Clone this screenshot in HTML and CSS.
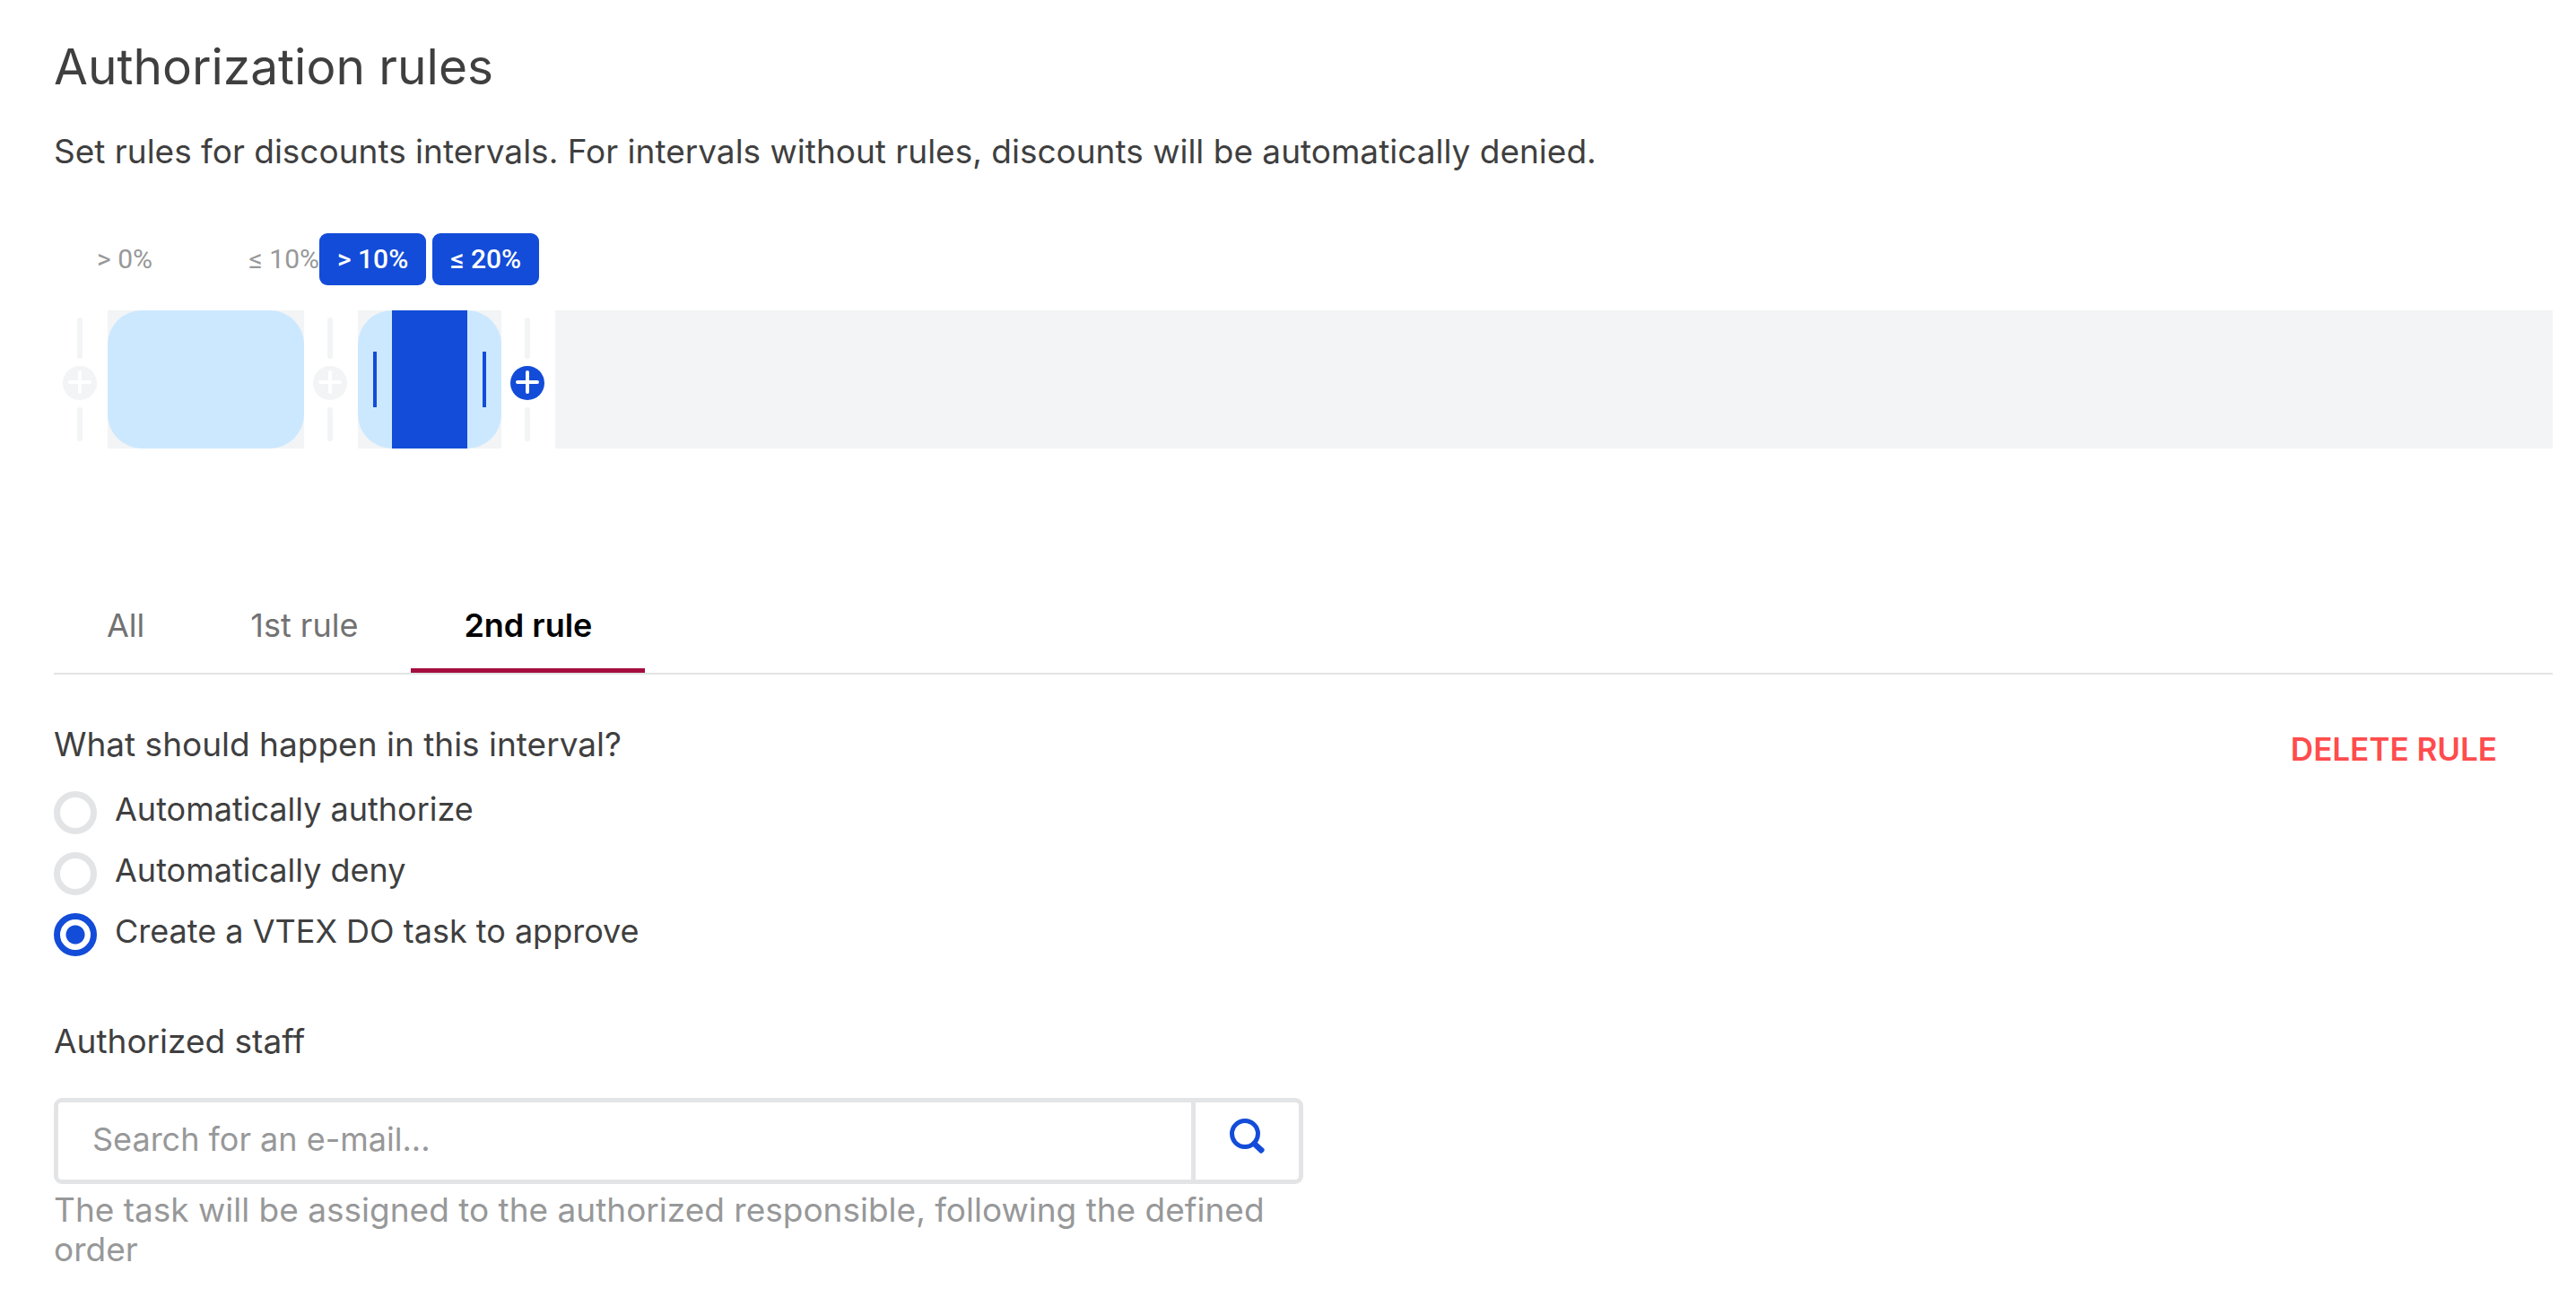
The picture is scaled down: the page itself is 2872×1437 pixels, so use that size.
FILE: index.html
```html
<!DOCTYPE html>
<html lang="en">
<head>
  <meta charset="utf-8">
  <meta name="viewport" content="width=device-width, initial-scale=1">
  <title>Authorization rules</title>
  <link rel="stylesheet" href="styles.css">
</head>
<body>
  <main class="page">
    <h1 class="title">Authorization rules</h1>
    <p class="subtitle">Set rules for discounts intervals. For intervals without rules, discounts will be automatically denied.</p>

    <section class="slider" aria-label="Discount intervals">
      <div class="limits">
        <div class="limits-idle">
          <span>&gt; 0%</span>
          <span>≤ 10%</span>
        </div>
        <div class="limits-active">
          <span class="pill">&gt; 10%</span>
          <span class="pill">≤ 20%</span>
        </div>
      </div>
      <div class="track">
        <div class="gap">
          <span class="bar bar-top"></span>
          <button class="add" type="button" aria-label="Add rule before the 1st" disabled>
            <svg viewBox="0 0 38 38" aria-hidden="true"><path d="M19 7V29M8 18H30"/></svg>
          </button>
          <span class="bar bar-bottom"></span>
        </div>
        <div class="cell cell-first"><div class="range"></div></div>
        <div class="gap">
          <span class="bar bar-top"></span>
          <button class="add" type="button" aria-label="Add rule before the 2nd" disabled>
            <svg viewBox="0 0 38 38" aria-hidden="true"><path d="M19 7V29M8 18H30"/></svg>
          </button>
          <span class="bar bar-bottom"></span>
        </div>
        <div class="cell cell-second">
          <div class="range range-active">
            <span class="handle"></span>
            <span class="span"></span>
            <span class="handle"></span>
          </div>
        </div>
        <div class="gap">
          <span class="bar bar-top"></span>
          <button class="add" type="button" aria-label="Add rule after the 2nd">
            <svg viewBox="0 0 38 38" aria-hidden="true"><path d="M19 7V29M8 18H30"/></svg>
          </button>
          <span class="bar bar-bottom"></span>
        </div>
        <div class="cell cell-rest"></div>
      </div>
    </section>

    <nav class="tabs" aria-label="Rules">
      <button class="tab" type="button">All</button>
      <button class="tab" type="button">1st rule</button>
      <button class="tab tab-current" type="button" aria-current="true">2nd rule</button>
    </nav>

    <div class="rule">
      <fieldset class="choices">
        <legend class="heading">What should happen in this interval?</legend>
        <div class="choice">
          <input class="radio" type="radio" name="action" id="authorize">
          <label for="authorize">Automatically authorize</label>
        </div>
        <div class="choice">
          <input class="radio" type="radio" name="action" id="deny">
          <label for="deny">Automatically deny</label>
        </div>
        <div class="choice">
          <input class="radio" type="radio" name="action" id="task" checked>
          <label for="task">Create a VTEX DO task to approve</label>
        </div>
      </fieldset>
      <button class="delete" type="button">DELETE RULE</button>
    </div>

    <div class="staff">
      <label class="heading" for="email">Authorized staff</label>
      <div class="search">
        <input class="search-input" type="text" id="email" placeholder="Search for an e-mail...">
        <button class="search-button" type="button" aria-label="Search">
          <svg viewBox="0 0 40 40" aria-hidden="true">
            <circle cx="17" cy="17" r="14.5"/>
            <path d="M26 24.5L30.5 26.5L38.2 33.6Q39.4 35 38.2 36.4L36.4 38.2Q35 39.4 33.6 38.2L26.5 31.5L24.5 27Z"/>
          </svg>
        </button>
      </div>
      <p class="help">The task will be assigned to the authorized responsible, following the defined order</p>
    </div>
  </main>
</body>
</html>
```
FILE: styles.css
```css
:root {
  --action: #134cd8;
  --action-soft: #cce8ff;
  --surface: #f2f4f5;
  --line: #e3e4e6;
  --text: #3f3f40;
  --muted: #979899;
}

* {
  box-sizing: border-box;
}

body {
  margin: 0;
  background: #fff;
  color: var(--text);
  font-family: Inter, "Liberation Sans", sans-serif;
  font-size: 37px;
  line-height: 44px;
}

button,
input {
  margin: 0;
  padding: 0;
  border: 0;
  background: none;
  color: inherit;
  font: inherit;
}

button {
  cursor: pointer;
}

.page {
  padding: 40px 26px 20px 60px;
}

.title {
  margin: 0 0 34px;
  font-size: 55px;
  font-weight: 400;
  line-height: 68px;
}

.subtitle {
  margin: 0 0 64px;
  line-height: 54px;
}

/* Interval slider */

.limits {
  display: flex;
  margin-bottom: 28px;
  font-family: Roboto, "Liberation Sans", sans-serif;
  font-size: 30px;
  line-height: 58px;
}

.limits-idle {
  display: flex;
  justify-content: space-between;
  width: 296px;
  padding-left: 48px;
  color: var(--muted);
}

.limits-active {
  display: flex;
  gap: 7px;
}

.pill {
  padding: 0 20px;
  border-radius: 9px;
  background: var(--action);
  color: #fff;
  font-weight: 500;
}

.track {
  display: flex;
  height: 154px;
}

.gap {
  display: flex;
  flex: none;
  flex-direction: column;
  align-items: center;
  gap: 8px;
  width: 60px;
  padding: 8px 2px 8px 0;
}

.bar {
  width: 6px;
  border-radius: 3px;
  background: var(--surface);
}

.bar-top {
  height: 46px;
}

.bar-bottom {
  height: 38px;
}

.add {
  width: 38px;
  height: 38px;
  border-radius: 50%;
  background: var(--action);
}

.add:disabled {
  background: var(--surface);
  cursor: default;
}

.add svg {
  display: block;
  fill: none;
  stroke: #fff;
  stroke-width: 4;
  stroke-linecap: round;
}

.cell {
  flex: none;
  background: var(--surface);
}

.cell-first {
  width: 219px;
}

.cell-second {
  width: 160px;
}

.cell-rest {
  flex: 1;
}

.range {
  height: 100%;
  border-radius: 38px;
  background: var(--action-soft);
}

.range-active {
  display: flex;
}

.span {
  flex: 1;
  background: var(--action);
}

.handle {
  display: flex;
  align-items: center;
  justify-content: center;
  width: 38px;
}

.handle::before {
  content: "";
  width: 4px;
  height: 62px;
  background: var(--action);
}

/* Tabs */

.tabs {
  display: flex;
  margin-top: 149px;
  border-bottom: 2px solid var(--line);
}

.tab {
  padding: 21px 59px;
  border-bottom: 5px solid transparent;
  color: #727273;
  font-size: 36px;
  line-height: 54px;
}

.tab-current {
  border-color: #a50e3f;
  color: #000;
  font-weight: 600;
}

/* Rule form */

.rule {
  display: flex;
  align-items: flex-start;
  justify-content: space-between;
  margin-top: 56px;
}

.choices {
  display: flex;
  flex-direction: column;
  gap: 20px;
  margin: 0;
  padding: 0;
  border: 0;
}

.heading {
  display: block;
  padding: 0;
}

.choices .heading {
  margin-bottom: 30px;
}

.choice {
  display: flex;
  gap: 20px;
  height: 48px;
  font-size: 36px;
  line-height: 40px;
}

.radio {
  flex: none;
  width: 48px;
  height: 48px;
  border: 7px solid var(--line);
  border-radius: 50%;
  appearance: none;
}

.radio:checked {
  border-color: var(--action);
  background: radial-gradient(circle, var(--action) 10px, #fff 11px) padding-box;
}

.delete {
  padding: 5px 62px;
  color: #ff4c4c;
  font-size: 35px;
  font-weight: 600;
}

.staff {
  width: 50%;
  margin-top: 73px;
}

.search {
  display: flex;
  height: 96px;
  margin-top: 41px;
  border: 5px solid var(--line);
  border-radius: 9px;
}

.search-input {
  flex: 1;
  min-width: 0;
  padding: 0 38px 4px;
  outline: 0;
  font-size: 36px;
}

.search-input::placeholder {
  color: var(--muted);
  opacity: 1;
}

.search-button {
  display: flex;
  justify-content: center;
  width: 120px;
  padding-top: 18px;
  border-left: 5px solid var(--line);
}

.search-button svg {
  width: 40px;
  height: 40px;
  fill: none;
  stroke: var(--action);
  stroke-width: 5;
}

.search-button path {
  fill: var(--action);
  stroke: none;
}

.help {
  margin: 7px 0 0;
  color: var(--muted);
}
```
